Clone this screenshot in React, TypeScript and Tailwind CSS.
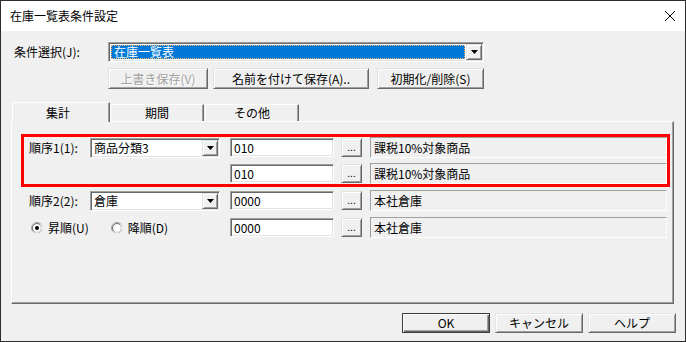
import React from "react";

const raised =
  "border border-t-[#e3e3e3] border-l-[#e3e3e3] border-r-[#696969] border-b-[#696969] shadow-[inset_1px_1px_0_#ffffff,inset_-1px_-1px_0_#a0a0a0] bg-[#f0f0f0]";
const sunken =
  "border border-t-[#a0a0a0] border-l-[#a0a0a0] border-r-white border-b-white shadow-[inset_1px_1px_0_#696969,inset_-1px_-1px_0_#e3e3e3]";

function DropButton() {
  return (
    <div className={`${raised} w-[16px] h-[16px] shrink-0 flex items-center justify-center`}>
      <svg width="7" height="4" viewBox="0 0 7 4">
        <path d="M0 0h7L3.5 4z" fill="#000" />
      </svg>
    </div>
  );
}

function Combo({ text }: { text: string }) {
  return (
    <div className={`${sunken} bg-white w-[130px] h-[20px] p-[1px] flex items-center`}>
      <span className="flex-1 pl-[2px] leading-none">{text}</span>
      <DropButton />
    </div>
  );
}

function CodeRow({ code, desc }: { code: string; desc: string }) {
  return (
    <>
      <div className={`${sunken} bg-white w-[104px] h-[19px] flex items-center pl-[3px] leading-none`}>{code}</div>
      <div className={`${raised} ml-[7px] w-[21px] h-[19px] flex items-end justify-center pb-[4px] text-[10px] leading-none`}>
        ...
      </div>
      <div className="ml-[8px] w-[297px] h-[21px] border border-t-[#a0a0a0] border-l-[#a0a0a0] border-r-white border-b-white flex items-center pl-[3px] leading-none">
        {desc}
      </div>
    </>
  );
}

function Radio({ checked }: { checked?: boolean }) {
  return (
    <svg width="12" height="12" viewBox="0 0 12 12" className="shrink-0">
      <circle cx="6" cy="6" r="5.5" fill="#fff" stroke="#a0a0a0" />
      <path d="M9.89 2.11A5.5 5.5 0 0 1 2.11 9.89" fill="none" stroke="#fff" />
      <circle cx="6" cy="6" r="4.5" fill="#fff" stroke="#696969" />
      <path d="M9.18 2.82A4.5 4.5 0 0 1 2.82 9.18" fill="none" stroke="#e3e3e3" />
      {checked && <circle cx="6" cy="6" r="2" fill="#000" />}
    </svg>
  );
}

export default function App() {
  return (
    <div className="w-[686px] h-[342px] flex flex-col border border-[#2d2d2d] bg-[#f0f0f0] text-[12px] text-black font-['Noto_Sans_CJK_JP',sans-serif] overflow-hidden">
      {/* title bar */}
      <div className="h-[30px] shrink-0 bg-white flex items-center pl-[9px] pr-[10px]">
        <span className="leading-none">在庫一覧表条件設定</span>
        <svg className="ml-auto" width="10" height="10" viewBox="0 0 10 10">
          <path d="M0 0L10 10M10 0L0 10" stroke="#000" strokeWidth="1" />
        </svg>
      </div>

      {/* condition select */}
      <div className="flex items-center mt-[11px] pl-[13px] h-[20px]">
        <span className="w-[94px] leading-none">条件選択(J):</span>
        <div className={`${sunken} bg-white w-[376px] h-[20px] p-[1px] flex items-center`}>
          <div className="flex-1 h-[14px] mr-[1px] ml-[1px] bg-[#0078d7] border border-dotted border-[#f5b46a] text-white flex items-center pl-[2px] leading-none">
            在庫一覧表
          </div>
          <DropButton />
        </div>
      </div>

      <div className="flex mt-[6px] ml-[107px] h-[21px]">
        <div className={`${raised} w-[100px] flex items-center justify-center text-[#a0a0a0] [text-shadow:1px_1px_0_#ffffff] leading-none`}>
          上書き保存(V)
        </div>
        <div className={`${raised} ml-[5px] w-[156px] flex items-center justify-center leading-none`}>
          名前を付けて保存(A)..
        </div>
        <div className={`${raised} ml-[8px] w-[107px] flex items-center justify-center leading-none`}>
          初期化/削除(S)
        </div>
      </div>

      {/* tabs */}
      <div className="flex items-end h-[19px] mt-[13px] ml-[11px]">
        <div className="relative z-10 -mb-px w-[98px] h-[20px] bg-[#f0f0f0] border-t border-l border-r border-t-white border-l-white border-r-[#696969] shadow-[inset_-1px_0_0_#a0a0a0] flex items-center justify-center pr-[6px] leading-none">
          集計
        </div>
        <div className="w-[94px] h-[17px] border-t border-l border-r border-t-white border-l-white border-r-[#696969] shadow-[inset_-1px_0_0_#a0a0a0] flex items-center justify-center leading-none">
          期間
        </div>
        <div className="ml-[1px] w-[94px] h-[17px] border-t border-l border-r border-t-white border-l-white border-r-[#696969] shadow-[inset_-1px_0_0_#a0a0a0] flex items-center justify-center leading-none">
          その他
        </div>
      </div>

      <div className="relative ml-[10px] w-[663px] h-[183px] border border-t-white border-l-white border-r-[#696969] border-b-[#696969] shadow-[inset_-1px_-1px_0_#a0a0a0] pt-[15px] pl-[17px]">
        <div className="flex items-center h-[21px]">
          <span className="w-[61px] leading-none">順序1(1):</span>
          <Combo text="商品分類3" />
          <div className="w-[10px]" />
          <CodeRow code="010" desc="課税10%対象商品" />
        </div>
        <div className="flex items-center h-[21px] mt-[5px]">
          <div className="w-[201px]" />
          <CodeRow code="010" desc="課税10%対象商品" />
        </div>
        <div className="flex items-center h-[21px] mt-[6px]">
          <span className="w-[61px] leading-none">順序2(2):</span>
          <Combo text="倉庫" />
          <div className="w-[10px]" />
          <CodeRow code="0000" desc="本社倉庫" />
        </div>
        <div className="flex items-center h-[21px] mt-[6px]">
          <div className="w-[201px] flex items-center pl-[2px]">
            <Radio checked />
            <span className="ml-[5px] leading-none">昇順(U)</span>
            <div className="ml-[22px] flex items-center">
              <Radio />
              <span className="ml-[5px] leading-none">降順(D)</span>
            </div>
          </div>
          <CodeRow code="0000" desc="本社倉庫" />
        </div>

        {/* annotation */}
        <div className="absolute left-[9px] top-[12px] w-[649px] h-[53px] border-[3px] border-[#ff0000] pointer-events-none" />
      </div>

      {/* dialog buttons */}
      <div className="flex justify-end gap-[5px] mt-[9px] pr-[9px] h-[20px]">
        <div className="w-[88px] border border-[#3c3c3c] bg-[#f0f0f0] shadow-[inset_1px_1px_0_#ffffff,inset_-1px_-1px_0_#696969,inset_-2px_-2px_0_#a0a0a0] flex items-center justify-center leading-none">
          OK
        </div>
        <div className={`${raised} w-[88px] flex items-center justify-center leading-none`}>キャンセル</div>
        <div className={`${raised} w-[88px] flex items-center justify-center leading-none`}>ヘルプ</div>
      </div>
    </div>
  );
}
